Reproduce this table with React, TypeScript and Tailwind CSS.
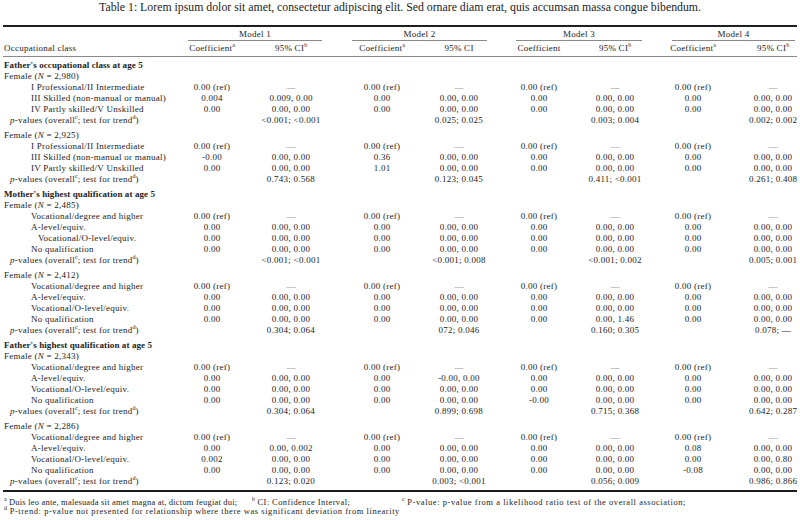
import React from "react";

type Cells = string[];

const REF: Cells = ["0.00 (ref)", "—", "0.00 (ref)", "—", "0.00 (ref)", "—", "0.00 (ref)", "—"];
const Z: Cells = ["0.00", "0.00, 0.00", "0.00", "0.00, 0.00", "0.00", "0.00, 0.00", "0.00", "0.00, 0.00"];
const P = (a: string, b: string, c: string, d: string): Cells => ["", a, "", b, "", c, "", d];

type Row =
  | { kind: "section"; label: string; gap?: boolean }
  | { kind: "group"; n: string; gap?: boolean }
  | { kind: "item"; label: string; vals: Cells; extra?: boolean }
  | { kind: "p"; vals: Cells };

const rows: Row[] = [
  { kind: "section", label: "Father's occupational class at age 5" },
  { kind: "group", n: "2,980" },
  { kind: "item", label: "I Professional/II Intermediate", vals: REF },
  { kind: "item", label: "III Skilled (non-manual or manual)", vals: ["0.004", "0.009, 0.00", "0.00", "0.00, 0.00", "0.00", "0.00, 0.00", "0.00", "0.00, 0.00"] },
  { kind: "item", label: "IV Partly skilled/V Unskilled", vals: Z },
  { kind: "p", vals: P("<0.001; <0.001", "0.025; 0.025", "0.003; 0.004", "0.002; 0.002") },
  { kind: "group", n: "2,925", gap: true },
  { kind: "item", label: "I Professional/II Intermediate", vals: REF },
  { kind: "item", label: "III Skilled (non-manual or manual)", vals: ["-0.00", "0.00, 0.00", "0.36", "0.00, 0.00", "0.00", "0.00, 0.00", "0.00", "0.00, 0.00"] },
  { kind: "item", label: "IV Partly skilled/V Unskilled", vals: ["0.00", "0.00, 0.00", "1.01", "0.00, 0.00", "0.00", "0.00, 0.00", "0.00", "0.00, 0.00"] },
  { kind: "p", vals: P("0.743; 0.568", "0.123; 0.045", "0.411; <0.001", "0.261; 0.408") },
  { kind: "section", label: "Mother's highest qualification at age 5", gap: true },
  { kind: "group", n: "2,485" },
  { kind: "item", label: "Vocational/degree and higher", vals: REF },
  { kind: "item", label: "A-level/equiv.", vals: Z },
  { kind: "item", label: "Vocational/O-level/equiv.", vals: Z, extra: true },
  { kind: "item", label: "No qualification", vals: Z },
  { kind: "p", vals: P("<0.001; <0.001", "<0.001; 0.008", "<0.001; 0.002", "0.005; 0.001") },
  { kind: "group", n: "2,412", gap: true },
  { kind: "item", label: "Vocational/degree and higher", vals: REF },
  { kind: "item", label: "A-level/equiv.", vals: Z },
  { kind: "item", label: "Vocational/O-level/equiv.", vals: Z },
  { kind: "item", label: "No qualification", vals: ["0.00", "0.00, 0.00", "0.00", "0.00, 0.00", "0.00", "0.00, 1.46", "0.00", "0.00, 0.00"] },
  { kind: "p", vals: P("0.304; 0.064", "072; 0.046", "0.160; 0.305", "0.078; —") },
  { kind: "section", label: "Father's highest qualification at age 5", gap: true },
  { kind: "group", n: "2,343" },
  { kind: "item", label: "Vocational/degree and higher", vals: REF },
  { kind: "item", label: "A-level/equiv.", vals: ["0.00", "0.00, 0.00", "0.00", "-0.00, 0.00", "0.00", "0.00, 0.00", "0.00", "0.00, 0.00"] },
  { kind: "item", label: "Vocational/O-level/equiv.", vals: Z },
  { kind: "item", label: "No qualification", vals: ["0.00", "0.00, 0.00", "0.00", "0.00, 0.00", "-0.00", "0.00, 0.00", "0.00", "0.00, 0.00"] },
  { kind: "p", vals: P("0.304; 0.064", "0.899; 0.698", "0.715; 0.368", "0.642; 0.287") },
  { kind: "group", n: "2,286", gap: true },
  { kind: "item", label: "Vocational/degree and higher", vals: REF },
  { kind: "item", label: "A-level/equiv.", vals: ["0.00", "0.00, 0.002", "0.00", "0.00, 0.00", "0.00", "0.00, 0.00", "0.08", "0.00, 0.00"] },
  { kind: "item", label: "Vocational/O-level/equiv.", vals: ["0.002", "0.00, 0.00", "0.00", "0.00, 0.00", "0.00", "0.00, 0.00", "0.00", "0.00, 0.80"] },
  { kind: "item", label: "No qualification", vals: ["0.00", "0.00, 0.00", "0.00", "0.00, 0.00", "0.00", "0.00, 0.00", "-0.08", "0.00, 0.00"] },
  { kind: "p", vals: P("0.123; 0.020", "0.003; <0.001", "0.056; 0.009", "0.986; 0.866") },
];

const GRID = "grid grid-cols-[172px_80px_78px_104px_50px_110px_42px_114px_46px]";

function Sup({ children }: { children: React.ReactNode }) {
  return <sup className="text-[6px] top-[-0.6em] tracking-normal">{children}</sup>;
}

function ValueCells({ vals }: { vals: Cells }) {
  return (
    <>
      {vals.map((v, i) => (
        <div key={i} className="flex justify-center whitespace-nowrap">
          <span className={v === "—" ? "text-[#9a9a9a]" : ""}>{v}</span>
        </div>
      ))}
    </>
  );
}

function TableRow({ row }: { row: Row }) {
  const gap = "gap" in row && row.gap ? "mt-[4px]" : "";
  if (row.kind === "section") {
    return (
      <div className={`h-[11px] leading-[11px] pl-[4px] font-bold text-[9px] tracking-[0.1px] whitespace-nowrap ${gap}`}>
        {row.label}
      </div>
    );
  }
  if (row.kind === "group") {
    return (
      <div className={`h-[11px] leading-[11px] pl-[4px] whitespace-nowrap ${gap}`}>
        Female (<i>N</i> = {row.n})
      </div>
    );
  }
  if (row.kind === "item") {
    return (
      <div className={`${GRID} h-[11px] leading-[11px] items-center`}>
        <div className={`whitespace-nowrap ${row.extra ? "pl-[38px]" : "pl-[31px]"}`}>{row.label}</div>
        <ValueCells vals={row.vals} />
      </div>
    );
  }
  return (
    <div className={`${GRID} h-[11px] leading-[11px] items-center`}>
      <div className="whitespace-nowrap pl-[10px]">
        <i>p</i>-values (overall<Sup>c</Sup>; test for trend<Sup>d</Sup>)
      </div>
      <ValueCells vals={row.vals} />
    </div>
  );
}

const HC = "flex justify-center whitespace-nowrap";

export default function App() {
  return (
    <div className="w-[800px] h-[520px] bg-white text-[#1c1c1c] font-['Liberation_Serif','Times_New_Roman',serif] overflow-hidden">
      <div className="h-[15px] leading-[15px] text-[11.8px] text-center whitespace-nowrap">
        Table 1: Lorem ipsum dolor sit amet, consectetur adipiscing elit. Sed ornare diam erat, quis accumsan massa congue bibendum.
      </div>
      <div className="mx-[3px] mt-[10px] h-[2px] bg-[#1e1e1e]" />
      <div className="text-[9px] tracking-[0.25px]">
        <div className="flex h-[14px]">
          <div className="ml-[188px] w-[134px] border-b border-[#8a8a8a] text-center leading-[14px]">Model 1</div>
          <div className="ml-[30px] w-[135px] border-b border-[#8a8a8a] text-center leading-[14px]">Model 2</div>
          <div className="ml-[29px] w-[126px] border-b border-[#8a8a8a] text-center leading-[14px]">Model 3</div>
          <div className="ml-[30px] w-[123px] border-b border-[#8a8a8a] text-center leading-[14px]">Model 4</div>
        </div>
        <div className={`${GRID} h-[15px] leading-[15px] items-center`}>
          <div className="pl-[4px] whitespace-nowrap">Occupational class</div>
          <div className={HC}><span>Coefficient<Sup>a</Sup></span></div>
          <div className={HC}><span>95% CI<Sup>b</Sup></span></div>
          <div className={HC}><span>Coefficient<Sup>a</Sup></span></div>
          <div className={HC}><span>95% CI</span></div>
          <div className={HC}><span>Coefficient</span></div>
          <div className={HC}><span>95% CI<Sup>b</Sup></span></div>
          <div className={HC}><span>Coefficient<Sup>a</Sup></span></div>
          <div className={HC}><span>95% CI<Sup>b</Sup></span></div>
        </div>
        <div className="mx-[3px] h-px bg-[#8a8a8a]" />
        <div className="pt-[3px]">
          {rows.map((r, i) => (
            <TableRow key={i} row={r} />
          ))}
        </div>
        <div className="mx-[3px] mt-[3px] h-[2px] bg-[#1e1e1e]" />
        <div className="mt-[6px] pl-[4px] text-[8.5px] leading-[9px] whitespace-nowrap">
          <div className="flex">
            <span className="w-[248px] shrink-0 tracking-[0.2px]"><Sup>a</Sup> Duis leo ante, malesuada sit amet magna at, dictum feugiat dui;</span>
            <span className="w-[150px] shrink-0 tracking-[0.4px]"><Sup>b</Sup> CI: Confidence Interval;</span>
            <span className="shrink-0 tracking-[0.55px]"><Sup>c</Sup> P-value: p-value from a likelihood ratio test of the overall association;</span>
          </div>
          <div className="tracking-[0.55px]">
            <Sup>d</Sup> P-trend: p-value not presented for relationship where there was significant deviation from linearity
          </div>
        </div>
      </div>
    </div>
  );
}
